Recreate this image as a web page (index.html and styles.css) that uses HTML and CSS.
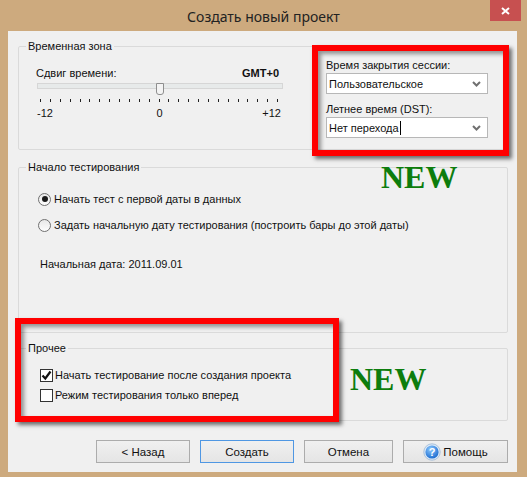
FILE: index.html
```html
<!DOCTYPE html>
<html lang="ru">
<head>
    <meta charset="UTF-8">
    <title>Создать новый проект</title>
    <link rel="stylesheet" href="styles.css">
</head>
<body>
    <div class="window">
        <div class="titlebar">
            <span class="title">Создать новый проект</span>
            <span class="close">
                <svg width="9" height="8" viewBox="0 0 9 8"><path d="M1 1 L8 7 M8 1 L1 7" stroke="#fff" stroke-width="2"/></svg>
            </span>
        </div>
        <div class="client">
            <fieldset class="group group-zone">
                <legend>Временная зона</legend>
                <div class="zone-body">
                    <div class="shift">
                        <div class="shift-head"><span>Сдвиг времени:</span><b>GMT+0</b></div>
                        <div class="slider">
                            <div class="track"></div>
                            <div class="thumb"></div>
                        </div>
                        <div class="ticks">
                            <i></i><i></i><i></i><i></i><i></i><i></i><i></i><i></i><i></i><i></i><i></i><i></i><i></i>
                            <i></i><i></i><i></i><i></i><i></i><i></i><i></i><i></i><i></i><i></i><i></i><i></i>
                        </div>
                        <div class="scale"><span>-12</span><span>0</span><span>+12</span></div>
                    </div>
                    <div class="session">
                        <div class="field-label">Время закрытия сессии:</div>
                        <div class="combo">
                            <span>Пользовательское</span>
                            <svg width="9" height="6" viewBox="0 0 9 6"><path d="M1 1 L4.5 4.5 L8 1" fill="none" stroke="#707070" stroke-width="2"/></svg>
                        </div>
                        <div class="field-label">Летнее время (DST):</div>
                        <div class="combo">
                            <span>Нет перехода<i class="caret"></i></span>
                            <svg width="9" height="6" viewBox="0 0 9 6"><path d="M1 1 L4.5 4.5 L8 1" fill="none" stroke="#707070" stroke-width="2"/></svg>
                        </div>
                    </div>
                </div>
            </fieldset>

            <fieldset class="group group-start">
                <legend>Начало тестирования</legend>
                <div class="start-body">
                    <div class="option"><span class="radio checked"></span>Начать тест с первой даты в данных</div>
                    <div class="option"><span class="radio"></span>Задать начальную дату тестирования (построить бары до этой даты)</div>
                    <div class="start-date">Начальная дата: 2011.09.01</div>
                </div>
            </fieldset>

            <fieldset class="group group-misc">
                <legend>Прочее</legend>
                <div class="misc-body">
                    <div class="option">
                        <span class="check">
                            <svg width="11" height="11" viewBox="0 0 11 11"><path d="M1.5 5.5 L4.3 8.5 L9.5 1.5" fill="none" stroke="#111" stroke-width="2.2"/></svg>
                        </span>Начать тестирование после создания проекта
                    </div>
                    <div class="option"><span class="check"></span>Режим тестирования только вперед</div>
                </div>
            </fieldset>

            <div class="buttons">
                <button class="btn btn-back">&lt; Назад</button>
                <button class="btn btn-create">Создать</button>
                <button class="btn btn-cancel">Отмена</button>
                <button class="btn btn-help">
                    <svg width="18" height="18" viewBox="0 0 18 18">
                        <defs>
                            <radialGradient id="helpFill" cx="40%" cy="30%" r="70%">
                                <stop offset="0" stop-color="#8cc8ff"/>
                                <stop offset="1" stop-color="#1f6fd1"/>
                            </radialGradient>
                        </defs>
                        <circle cx="9" cy="9" r="8.2" fill="#dbe9f7" stroke="#9cb8d6" stroke-width="0.8"/>
                        <circle cx="9" cy="9" r="6.6" fill="url(#helpFill)"/>
                        <text x="9" y="13" text-anchor="middle" font-family="Liberation Sans, sans-serif" font-weight="bold" font-size="11" fill="#fff">?</text>
                    </svg>Помощь
                </button>
            </div>

            <div class="mark mark-session"></div>
            <div class="mark mark-misc"></div>
            <div class="new new-start">NEW</div>
            <div class="new new-misc">NEW</div>
        </div>
    </div>
</body>
</html>
```

FILE: styles.css
```css
body {
    margin: 0;
    background: #fff;
    font-family: "Liberation Sans", Arial, sans-serif;
    font-size: 11px;
    color: #111;
}
.window {
    width: 527px;
    height: 477px;
    background: #cdaa7e;
    display: flex;
    flex-direction: column;
}
.titlebar {
    position: relative;
    height: 31px;
    display: flex;
    align-items: center;
    justify-content: center;
}
.title {
    font-family: "Noto Sans", sans-serif;
    font-size: 14px;
    color: #222;
    margin-top: 1px;
}
.close {
    position: absolute;
    top: 0;
    right: 6px;
    width: 31px;
    height: 21px;
    background: #c75050;
    display: flex;
    align-items: center;
    justify-content: center;
}
.client {
    position: relative;
    margin: 0 10px 5px 8px;
    height: 441px;
    box-sizing: border-box;
    padding: 8px 9px 0 10px;
    background: #f0f0f0;
    display: flex;
    flex-direction: column;
}
.group {
    margin: 0;
    padding: 0;
    min-width: 0;
    box-sizing: border-box;
    border: 1px solid #dadada;
    border-radius: 2px;
}
.group legend {
    margin-left: 7px;
    padding: 0 2px;
    line-height: 14px;
}
.group-zone {
    height: 111px;
    margin-bottom: 10px;
}
.group-start {
    height: 173px;
    margin-bottom: 8px;
}
.group-misc {
    height: 80px;
    margin-bottom: 19px;
}

/* time zone */
.zone-body {
    display: grid;
    grid-template-columns: 247px 162px;
    column-gap: 43px;
    padding-left: 17px;
}
.shift {
    padding-top: 13px;
}
.shift-head {
    display: flex;
    justify-content: space-between;
    line-height: 14px;
}
.shift-head b {
    margin-right: 4px;
}
.slider {
    position: relative;
    height: 12px;
}
.track {
    margin: 3px 0 0 1px;
    height: 4px;
    background: #e7eaea;
    border: 1px solid #d6d6d6;
}
.thumb {
    position: absolute;
    left: 120px;
    top: 0;
    width: 6px;
    height: 10px;
    background: #f3f3f3;
    border: 1px solid #8e8e8e;
    border-radius: 0 0 3px 3px;
}
.ticks {
    display: flex;
    justify-content: space-between;
    padding: 4px 5px 0 4px;
    height: 3px;
}
.ticks i {
    width: 1px;
    height: 3px;
    background: #222;
}
.scale {
    display: grid;
    grid-template-columns: 1fr auto 1fr;
    line-height: 14px;
    margin-top: 4px;
}
.scale span:first-child {
    text-align: left;
    padding-left: 1px;
}
.scale span:last-child {
    text-align: right;
    padding-right: 2px;
}
.session {
    padding-top: 5px;
}
.field-label {
    line-height: 14px;
    margin-bottom: 1px;
}
.combo {
    height: 21px;
    box-sizing: border-box;
    border: 1px solid #b7b7b7;
    background: #fff;
    display: flex;
    align-items: center;
    justify-content: space-between;
    padding: 0 6px 0 2px;
    margin-bottom: 8px;
}
.caret {
    display: inline-block;
    width: 1px;
    height: 14px;
    background: #000;
    vertical-align: -3px;
    margin-left: 1px;
}

/* start of testing */
.start-body {
    padding: 18px 0 0 19px;
}
.option {
    display: flex;
    align-items: center;
    line-height: 14px;
}
.start-body .option + .option {
    margin-top: 12px;
}
.radio {
    width: 11px;
    height: 11px;
    border: 1px solid #707070;
    border-radius: 50%;
    background: linear-gradient(#e8e8e8, #fdfdfd);
    margin-right: 3px;
    display: flex;
    align-items: center;
    justify-content: center;
}
.radio.checked::after {
    content: "";
    width: 6px;
    height: 6px;
    border-radius: 50%;
    background: #1a1a1a;
}
.start-date {
    margin: 25px 0 0 2px;
    line-height: 14px;
}

/* misc */
.misc-body {
    padding: 13px 0 0 21px;
}
.misc-body .option + .option {
    margin-top: 6px;
}
.check {
    width: 11px;
    height: 11px;
    border: 1px solid #333;
    background: #fff;
    margin-right: 2px;
    display: flex;
    align-items: center;
    justify-content: center;
}

/* buttons */
.buttons {
    display: flex;
    justify-content: flex-end;
    gap: 10px;
}
.btn {
    height: 23px;
    border: 1px solid #acacac;
    background: linear-gradient(#f0f0f0, #e5e5e5);
    font-family: "Liberation Sans", Arial, sans-serif;
    font-size: 11.5px;
    color: #111;
    display: flex;
    align-items: center;
    justify-content: center;
    padding: 0;
}
.btn-back { width: 94px; }
.btn-create { width: 94px; border-color: #4f97e3; }
.btn-cancel { width: 89px; }
.btn-help { width: 105px; gap: 2px; }

/* annotations over the dialog */
.mark {
    position: absolute;
    border: 6px solid #ff0000;
    box-sizing: border-box;
    box-shadow: 3px 3px 4px rgba(0, 0, 0, 0.55), inset 3px 3px 4px rgba(0, 0, 0, 0.4);
}
.mark-session {
    left: 304px;
    top: 14px;
    width: 197px;
    height: 111px;
}
.mark-misc {
    left: 7px;
    top: 287px;
    width: 324px;
    height: 104px;
}
.new {
    position: absolute;
    font-family: "Liberation Serif", "Times New Roman", serif;
    font-weight: bold;
    font-size: 32px;
    line-height: 32px;
    color: #0d7d0d;
}
.new-start {
    left: 373px;
    top: 130px;
}
.new-misc {
    left: 342px;
    top: 332px;
}
```
